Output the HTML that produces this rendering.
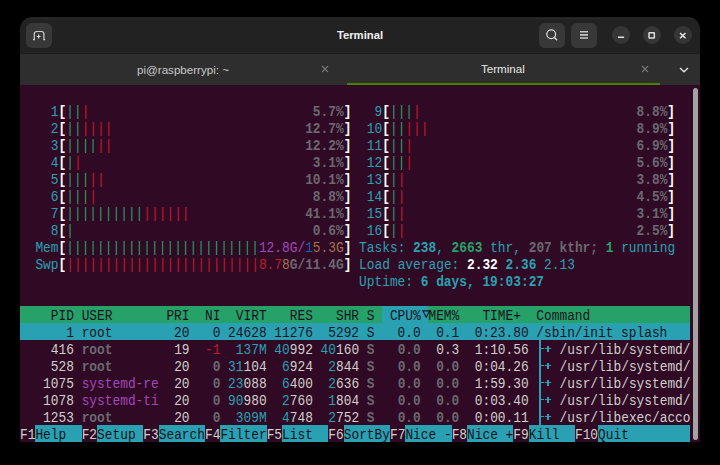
<!DOCTYPE html>
<html><head><meta charset="utf-8">
<style>
html,body{margin:0;padding:0;background:#000;width:720px;height:465px;overflow:hidden}
#win{position:absolute;left:20px;top:17px;width:680px;height:425px;background:#222222;border-radius:12px 12px 0 0;overflow:hidden}
#hl{position:absolute;left:0;top:1px;width:680px;height:1px;background:#2a2a2a}
#sep{position:absolute;left:0;top:36px;width:680px;height:1px;background:#1c1c1c}
#tabbar{position:absolute;left:0;top:37px;width:680px;height:31px;background:#2e2e2e}
#ind{position:absolute;left:327px;top:66px;width:313px;height:2px;background:#4a8000}
#term{position:absolute;left:0;top:68px;width:680px;height:357px;background:#300a24;overflow:hidden}
.row{position:absolute;left:0.1px;height:17px;width:756.9px;transform:scaleX(0.885625);transform-origin:0 0;font-family:"Liberation Mono",monospace;font-size:14.5px;line-height:17px;white-space:pre}
.bg{position:absolute;height:17px}
.tl{position:absolute;background:#2aa1b3}
.n{color:#d0cfcc}
.W{color:#ffffff;font-weight:bold}
.c{color:#2aa1b3}
.C{color:#2aa1b3;font-weight:bold}
.g{color:#26a269}
.G{color:#26a269;font-weight:bold}
.r{color:#c01c28}
.m{color:#a347ba}
.y{color:#a2734c}
.b{color:#1a5fb4}
.k{color:#6a6870;font-weight:bold}
.hdr{color:#171421}
.sel{color:#171421}
.key{color:#d0cfcc}
.lbl{color:#171421}
.btn{position:absolute;background:#383838;border-radius:6px}
.cbtn{position:absolute;width:18px;height:18px;border-radius:9px;background:#363636}
.ui{font-family:"Liberation Sans",sans-serif;position:absolute;white-space:pre}
#scroll{position:absolute;left:673.3px;top:2.8px;width:4.8px;height:352.2px;border-radius:3px;background:#a3a3a3}
</style></head><body>
<div id="win">
  <div id="hl"></div>
  <div class="btn" style="left:6px;top:6px;width:26px;height:25px">
    <svg width="26" height="25" style="position:absolute;left:0;top:0"><path d="M7 16.6 H8.3 V11 Q8.3 8.5 10.8 8.5 H15.4 Q17.9 8.5 17.9 11 V16.6 H19.2" fill="none" stroke="#d0d0d0" stroke-width="1.2"/><path d="M12.6 11.6 V15.4 M10.7 13.5 H14.5" stroke="#d8d8d8" stroke-width="1.2"/></svg>
  </div>
  <div class="ui" style="left:0;width:680px;top:11px;text-align:center;font-weight:bold;font-size:11.3px;color:#f0f0f0;line-height:14px">Terminal</div>
  <div class="btn" style="left:519px;top:6px;width:26px;height:25px">
    <svg width="26" height="25" style="position:absolute;left:0;top:0"><circle cx="12.2" cy="11.3" r="4.4" fill="none" stroke="#d6d6d6" stroke-width="1.3"/><path d="M15.3 14.4 L17.6 16.7" stroke="#d6d6d6" stroke-width="1.5" stroke-linecap="round"/></svg>
  </div>
  <div class="btn" style="left:551px;top:6px;width:26px;height:25px">
    <svg width="26" height="25" style="position:absolute;left:0;top:0"><path d="M9 8.8 H17 M9 11.9 H17 M9 15 H17" stroke="#c4c4c4" stroke-width="1.6"/></svg>
  </div>
  <div class="cbtn" style="left:592px;top:9px"><svg width="18" height="18"><path d="M5.9 11.35 H12.1" stroke="#e0e0e0" stroke-width="1.5"/></svg></div>
  <div class="cbtn" style="left:623px;top:9px"><svg width="18" height="18"><rect x="6.05" y="6.65" width="5.3" height="5.4" rx="0.5" fill="none" stroke="#e0e0e0" stroke-width="1.5"/></svg></div>
  <div class="cbtn" style="left:653.5px;top:9px"><svg width="18" height="18"><path d="M6.1 6.9 L11.5 12.3 M11.5 6.9 L6.1 12.3" stroke="#e8e8e8" stroke-width="1.45"/></svg></div>
  <div id="sep"></div>
  <div id="tabbar">
    <div class="ui" style="left:117px;top:8.5px;font-size:11.6px;line-height:14px;color:#c8c8c8">pi@raspberrypi: ~</div>
    <svg width="10" height="10" style="position:absolute;left:299.7px;top:10px"><path d="M2 2 L8 8 M8 2 L2 8" stroke="#777" stroke-width="1.1"/></svg>
    <div class="ui" style="left:461px;top:8px;font-size:11.6px;line-height:14px;color:#e6e6e6">Terminal</div>
    <svg width="10" height="10" style="position:absolute;left:619.7px;top:10px"><path d="M2 2 L8 8 M8 2 L2 8" stroke="#777" stroke-width="1.1"/></svg>
    <svg width="12" height="8" style="position:absolute;left:657.7px;top:11.5px"><path d="M2 2 L6 5.8 L10 2" fill="none" stroke="#e0e0e0" stroke-width="1.3"/></svg>
  </div>
  <div id="ind"></div>
  <div id="term">
<div class="row" style="top:1.5px"><span class="n">                                                                                       </span></div>
<div class="row" style="top:18.5px"><span class="n">  </span><span class="c">  1</span><span class="W">[</span><span class="g">||</span><span class="r">|</span><span class="n">                             </span><span class="k">5.7%</span><span class="W">]</span><span class="n"> </span><span class="c">  9</span><span class="W">[</span><span class="g">|||</span><span class="r">|</span><span class="n">                            </span><span class="k">8.8%</span><span class="W">]</span><span class="n">  </span></div>
<div class="row" style="top:35.5px"><span class="n">  </span><span class="c">  2</span><span class="W">[</span><span class="g">||</span><span class="r">||||</span><span class="n">                         </span><span class="k">12.7%</span><span class="W">]</span><span class="n"> </span><span class="c"> 10</span><span class="W">[</span><span class="g">||</span><span class="r">|||</span><span class="n">                           </span><span class="k">8.9%</span><span class="W">]</span><span class="n">  </span></div>
<div class="row" style="top:52.5px"><span class="n">  </span><span class="c">  3</span><span class="W">[</span><span class="g">||||</span><span class="r">||</span><span class="n">                         </span><span class="k">12.2%</span><span class="W">]</span><span class="n"> </span><span class="c"> 11</span><span class="W">[</span><span class="g">||</span><span class="r">|</span><span class="n">                             </span><span class="k">6.9%</span><span class="W">]</span><span class="n">  </span></div>
<div class="row" style="top:69.5px"><span class="n">  </span><span class="c">  4</span><span class="W">[</span><span class="g">|</span><span class="r">|</span><span class="n">                              </span><span class="k">3.1%</span><span class="W">]</span><span class="n"> </span><span class="c"> 12</span><span class="W">[</span><span class="g">||</span><span class="r">|</span><span class="n">                             </span><span class="k">5.6%</span><span class="W">]</span><span class="n">  </span></div>
<div class="row" style="top:86.5px"><span class="n">  </span><span class="c">  5</span><span class="W">[</span><span class="g">|||</span><span class="r">||</span><span class="n">                          </span><span class="k">10.1%</span><span class="W">]</span><span class="n"> </span><span class="c"> 13</span><span class="W">[</span><span class="g">|</span><span class="r">|</span><span class="n">                              </span><span class="k">3.8%</span><span class="W">]</span><span class="n">  </span></div>
<div class="row" style="top:103.5px"><span class="n">  </span><span class="c">  6</span><span class="W">[</span><span class="g">|||</span><span class="r">|</span><span class="n">                            </span><span class="k">8.8%</span><span class="W">]</span><span class="n"> </span><span class="c"> 14</span><span class="W">[</span><span class="g">|</span><span class="r">|</span><span class="n">                              </span><span class="k">4.5%</span><span class="W">]</span><span class="n">  </span></div>
<div class="row" style="top:120.5px"><span class="n">  </span><span class="c">  7</span><span class="W">[</span><span class="g">||||||||||</span><span class="r">||||||</span><span class="n">               </span><span class="k">41.1%</span><span class="W">]</span><span class="n"> </span><span class="c"> 15</span><span class="W">[</span><span class="g">|</span><span class="r">|</span><span class="n">                              </span><span class="k">3.1%</span><span class="W">]</span><span class="n">  </span></div>
<div class="row" style="top:137.5px"><span class="n">  </span><span class="c">  8</span><span class="W">[</span><span class="g">|</span><span class="n">                               </span><span class="k">0.6%</span><span class="W">]</span><span class="n"> </span><span class="c"> 16</span><span class="W">[</span><span class="g">|</span><span class="r">|</span><span class="n">                              </span><span class="k">2.5%</span><span class="W">]</span><span class="n">  </span></div>
<div class="row" style="top:154.5px"><span class="n">  </span><span class="c">Mem</span><span class="W">[</span><span class="g">|||||||||||||||||||||||||</span><span class="n"></span><span class="m">12.8G/</span><span class="b">1</span><span class="y">5.3G</span><span class="W">]</span><span class="n"> </span><span class="c">Tasks: </span><span class="C">238</span><span class="c">, </span><span class="G">2663</span><span class="c"> thr, </span><span class="k">207 kthr; </span><span class="G">1</span><span class="c"> running</span><span class="n">  </span></div>
<div class="row" style="top:171.5px"><span class="n">  </span><span class="c">Swp</span><span class="W">[</span><span class="r">|||||||||||||||||||||||||</span><span class="n"></span><span class="r">8.7</span><span class="y">8</span><span class="k">G/11.4G</span><span class="W">]</span><span class="n"> </span><span class="c">Load average: </span><span class="W">2.32</span><span class="n"> </span><span class="C">2.36</span><span class="c"> 2.13</span><span class="n">               </span></div>
<div class="row" style="top:188.5px"><span class="n">                                            </span><span class="c">Uptime: </span><span class="C">6 days, 19:03:27</span><span class="n">                   </span></div>
<div class="row" style="top:205.5px"><span class="n">                                                                                       </span></div>
<div class="bg" style="left:0.00px;top:221px;width:362.17px;background:#26a269"></div>
<div class="bg" style="left:362.17px;top:221px;width:46.23px;background:#2aa1b3"></div>
<div class="bg" style="left:408.40px;top:221px;width:161.82px;background:#26a269"></div>
<div class="bg" style="left:570.23px;top:221px;width:100.17px;background:#26a269"></div>
<div class="row" style="top:222.5px"><span class="hdr">    PID USER       PRI  NI  VIRT   RES   SHR S </span><span class="sel"> CPU% </span><span class="hdr">MEM%   TIME+  Command</span><span class="hdr">             </span></div>
<div class="bg" style="left:0.00px;top:238px;width:647.28px;background:#2aa1b3"></div>
<div class="bg" style="left:647.28px;top:238px;width:23.12px;background:#2aa1b3"></div>
<div class="row" style="top:239.5px"><span class="sel">      1 root        20   0 24628 11276  5292 S   0.0  0.1  0:23.80 /sbin/init splash</span><span class="sel">   </span></div>
<div class="row" style="top:256.5px"><span class="n">    416 </span><span class="k">root      </span><span class="n"> </span><span class="n"> 19 </span><span class="r"> -1</span><span class="n"> </span><span class="c"> 137M</span><span class="n"> </span><span class="c">40</span><span class="n">992</span><span class="n"> </span><span class="c">40</span><span class="n">160</span><span class="n"> </span><span class="k">S</span><span class="n"> </span><span class="k">  0.0</span><span class="n"> </span><span class="n"> 0.3</span><span class="n"> </span><span class="n"> 1:10.56 </span><span class="n">  </span><span class="n"> </span><span class="n">/usr/lib/systemd/</span></div>
<div class="row" style="top:273.5px"><span class="n">    528 </span><span class="k">root      </span><span class="n"> </span><span class="n"> 20 </span><span class="k">  0</span><span class="n"> </span><span class="c">31</span><span class="n">104</span><span class="n"> </span><span class="c"> 6</span><span class="n">924</span><span class="n"> </span><span class="c"> 2</span><span class="n">844</span><span class="n"> </span><span class="k">S</span><span class="n"> </span><span class="k">  0.0</span><span class="n"> </span><span class="k"> 0.0</span><span class="n"> </span><span class="n"> 0:04.26 </span><span class="n">  </span><span class="n"> </span><span class="n">/usr/lib/systemd/</span></div>
<div class="row" style="top:290.5px"><span class="n">   1075 </span><span class="m">systemd-re</span><span class="n"> </span><span class="n"> 20 </span><span class="k">  0</span><span class="n"> </span><span class="c">23</span><span class="n">088</span><span class="n"> </span><span class="c"> 6</span><span class="n">400</span><span class="n"> </span><span class="c"> 2</span><span class="n">636</span><span class="n"> </span><span class="k">S</span><span class="n"> </span><span class="k">  0.0</span><span class="n"> </span><span class="k"> 0.0</span><span class="n"> </span><span class="n"> 1:59.30 </span><span class="n">  </span><span class="n"> </span><span class="n">/usr/lib/systemd/</span></div>
<div class="row" style="top:307.5px"><span class="n">   1078 </span><span class="m">systemd-ti</span><span class="n"> </span><span class="n"> 20 </span><span class="k">  0</span><span class="n"> </span><span class="c">90</span><span class="n">980</span><span class="n"> </span><span class="c"> 2</span><span class="n">760</span><span class="n"> </span><span class="c"> 1</span><span class="n">804</span><span class="n"> </span><span class="k">S</span><span class="n"> </span><span class="k">  0.0</span><span class="n"> </span><span class="k"> 0.0</span><span class="n"> </span><span class="n"> 0:03.40 </span><span class="n">  </span><span class="n"> </span><span class="n">/usr/lib/systemd/</span></div>
<div class="row" style="top:324.5px"><span class="n">   1253 </span><span class="k">root      </span><span class="n"> </span><span class="n"> 20 </span><span class="k">  0</span><span class="n"> </span><span class="c"> 309M</span><span class="n"> </span><span class="c"> 4</span><span class="n">748</span><span class="n"> </span><span class="c"> 2</span><span class="n">752</span><span class="n"> </span><span class="k">S</span><span class="n"> </span><span class="k">  0.0</span><span class="n"> </span><span class="k"> 0.0</span><span class="n"> </span><span class="n"> 0:00.11 </span><span class="n">  </span><span class="n"> </span><span class="n">/usr/libexec/acco</span></div>
<div class="bg" style="left:15.41px;top:340px;width:46.23px;background:#2aa1b3"></div>
<div class="bg" style="left:77.06px;top:340px;width:46.23px;background:#2aa1b3"></div>
<div class="bg" style="left:138.70px;top:340px;width:46.23px;background:#2aa1b3"></div>
<div class="bg" style="left:200.35px;top:340px;width:46.23px;background:#2aa1b3"></div>
<div class="bg" style="left:262.00px;top:340px;width:46.23px;background:#2aa1b3"></div>
<div class="bg" style="left:323.64px;top:340px;width:46.23px;background:#2aa1b3"></div>
<div class="bg" style="left:385.29px;top:340px;width:46.23px;background:#2aa1b3"></div>
<div class="bg" style="left:446.93px;top:340px;width:46.23px;background:#2aa1b3"></div>
<div class="bg" style="left:508.58px;top:340px;width:46.23px;background:#2aa1b3"></div>
<div class="bg" style="left:577.93px;top:340px;width:30.82px;background:#2aa1b3"></div>
<div class="bg" style="left:608.75px;top:340px;width:61.65px;background:#2aa1b3"></div>
<div class="row" style="top:341.5px"><span class="key">F1</span><span class="lbl">Help  </span><span class="key">F2</span><span class="lbl">Setup </span><span class="key">F3</span><span class="lbl">Search</span><span class="key">F4</span><span class="lbl">Filter</span><span class="key">F5</span><span class="lbl">List  </span><span class="key">F6</span><span class="lbl">SortBy</span><span class="key">F7</span><span class="lbl">Nice -</span><span class="key">F8</span><span class="lbl">Nice +</span><span class="key">F9</span><span class="lbl">Kill  </span><span class="key">F10</span><span class="lbl">Quit</span><span class="lbl">        </span></div>
<div class="tl" style="left:521px;top:262.7px;width:2.8px;height:1.6px"></div>
<div class="tl" style="left:525px;top:263.1px;width:5.7px;height:1.4px"></div>
<div class="tl" style="left:527.2px;top:260.7px;width:1.4px;height:6.5px"></div>
<div class="tl" style="left:521px;top:279.7px;width:2.8px;height:1.6px"></div>
<div class="tl" style="left:525px;top:280.1px;width:5.7px;height:1.4px"></div>
<div class="tl" style="left:527.2px;top:277.7px;width:1.4px;height:6.5px"></div>
<div class="tl" style="left:521px;top:296.7px;width:2.8px;height:1.6px"></div>
<div class="tl" style="left:525px;top:297.1px;width:5.7px;height:1.4px"></div>
<div class="tl" style="left:527.2px;top:294.7px;width:1.4px;height:6.5px"></div>
<div class="tl" style="left:521px;top:313.7px;width:2.8px;height:1.6px"></div>
<div class="tl" style="left:525px;top:314.1px;width:5.7px;height:1.4px"></div>
<div class="tl" style="left:527.2px;top:311.7px;width:1.4px;height:6.5px"></div>
<div class="tl" style="left:521px;top:330.7px;width:2.8px;height:1.6px"></div>
<div class="tl" style="left:525px;top:331.1px;width:5.7px;height:1.4px"></div>
<div class="tl" style="left:527.2px;top:328.7px;width:1.4px;height:6.5px"></div>
<div class="tl" style="left:519.2px;top:255px;width:1.8px;height:85px"></div>
<svg style="position:absolute;left:400px;top:221px" width="12" height="12"><path d="M2.9 4.9 H9.5 L6.2 11.2 Z" fill="none" stroke="#171421" stroke-width="1.15" stroke-linejoin="miter"/></svg>
    <div id="scroll"></div>
  </div>
</div>
</body></html>
